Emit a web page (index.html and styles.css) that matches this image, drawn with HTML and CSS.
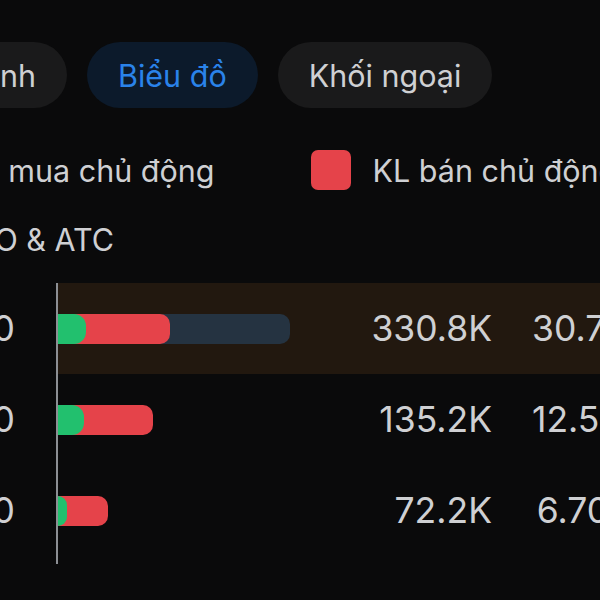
FILE: index.html
```html
<!DOCTYPE html>
<html lang="vi">
<head>
  <meta charset="UTF-8">
  <title>Biểu đồ khớp lệnh</title>
  <link rel="stylesheet" href="styles.css">
</head>
<body>

<div class="page">
  <!-- Tabs -->
  <div class="tabs">
    <div class="tab first">Khớp lệnh</div>
    <div class="tab active">Biểu đồ</div>
    <div class="tab">Khối ngoại</div>
  </div>

  <!-- Chú thích -->
  <div class="legend">
    <div class="legend-item"><span class="swatch buy-color"></span>KL mua chủ động</div>
    <div class="legend-item"><span class="swatch sell-color"></span>KL bán chủ động</div>
  </div>

  <div class="note">Bao gồm ATO &amp; ATC</div>

  <!-- Biểu đồ -->
  <div class="chart">
    <div class="prices">
      <div class="price">25.60</div>
      <div class="price">25.50</div>
      <div class="price">25.40</div>
    </div>
    <div class="plot">
      <div class="row selected">
        <div class="bar-cell">
          <div class="track" style="width: 232px">
            <div class="sell" style="width: 112px"><div class="buy" style="width: 28px"></div></div>
          </div>
        </div>
        <div class="vol">330.8K</div>
        <div class="pct">30.72%</div>
      </div>
      <div class="row">
        <div class="bar-cell">
          <div class="track empty" style="width: 232px">
            <div class="sell" style="width: 95px"><div class="buy" style="width: 26px"></div></div>
          </div>
        </div>
        <div class="vol">135.2K</div>
        <div class="pct">12.56%</div>
      </div>
      <div class="row">
        <div class="bar-cell">
          <div class="track empty" style="width: 232px">
            <div class="sell" style="width: 50px"><div class="buy" style="width: 9px"></div></div>
          </div>
        </div>
        <div class="vol">72.2K</div>
        <div class="pct">6.70%</div>
      </div>
    </div>
  </div>
</div>

</body>
</html>
```

FILE: styles.css
```css
body {
  margin: 0;
  background: #0a0a0b;
  font-family: Inter, "Noto Sans", sans-serif;
  color: #cfd0d3;
  width: 600px;
  height: 600px;
  overflow: hidden;
}
.page {
  padding-top: 42px;
}

/* tabs */
.tabs {
  display: flex;
  gap: 20px;
}
.tab {
  height: 66px;
  padding: 0 31px;
  border-radius: 33px;
  background: #1a1a1b;
  font-size: 30.5px;
  display: flex;
  align-items: center;
  white-space: nowrap;
}
.tab.first {
  width: 170px;
  margin-left: -103px;
  justify-content: flex-end;
  box-sizing: border-box;
}
.tab.active {
  background: #0c1a2b;
  color: #2a83ea;
}

/* legend */
.legend {
  display: flex;
  gap: 96px;
  margin-top: 42px;
  margin-left: -100px;
}
.legend-item {
  display: flex;
  align-items: center;
  gap: 22px;
  font-size: 30.5px;
  white-space: nowrap;
}
.swatch {
  width: 40px;
  height: 40px;
  border-radius: 7px;
  flex: none;
}
.buy-color { background: #22c06e; }
.sell-color { background: #e5434a; }

.note {
  font-size: 30.5px;
  line-height: 34px;
  margin-top: 33px;
  margin-left: -179px;
  white-space: nowrap;
}

/* chart */
.chart {
  display: flex;
  margin-top: 26px;
}
.prices {
  width: 100px;
  margin-left: -85px;
  padding-right: 41px;
  flex: none;
}
.price {
  height: 91px;
  display: flex;
  align-items: center;
  justify-content: flex-end;
  font-size: 35.5px;
}
.plot {
  flex: 1;
  border-left: 2px solid #8c8f94;
  padding-bottom: 8px;
}
.row {
  height: 91px;
  display: flex;
  align-items: center;
}
.row.selected { background: #22180f; }
.bar-cell {
  width: 232px;
  flex: none;
}
.track {
  height: 30px;
  background: #253341;
  border-radius: 0 10px 10px 0;
}
.track.empty { background: transparent; }
.sell {
  height: 30px;
  background: #e5434a;
  border-radius: 0 10px 10px 0;
}
.buy {
  height: 30px;
  background: #22c06e;
  border-radius: 0 12px 12px 0;
}
.vol {
  width: 202px;
  text-align: right;
  font-size: 35.5px;
  flex: none;
}
.pct {
  width: 112px;
  padding-left: 40px;
  text-align: right;
  font-size: 35.5px;
  flex: none;
  white-space: nowrap;
}
```
